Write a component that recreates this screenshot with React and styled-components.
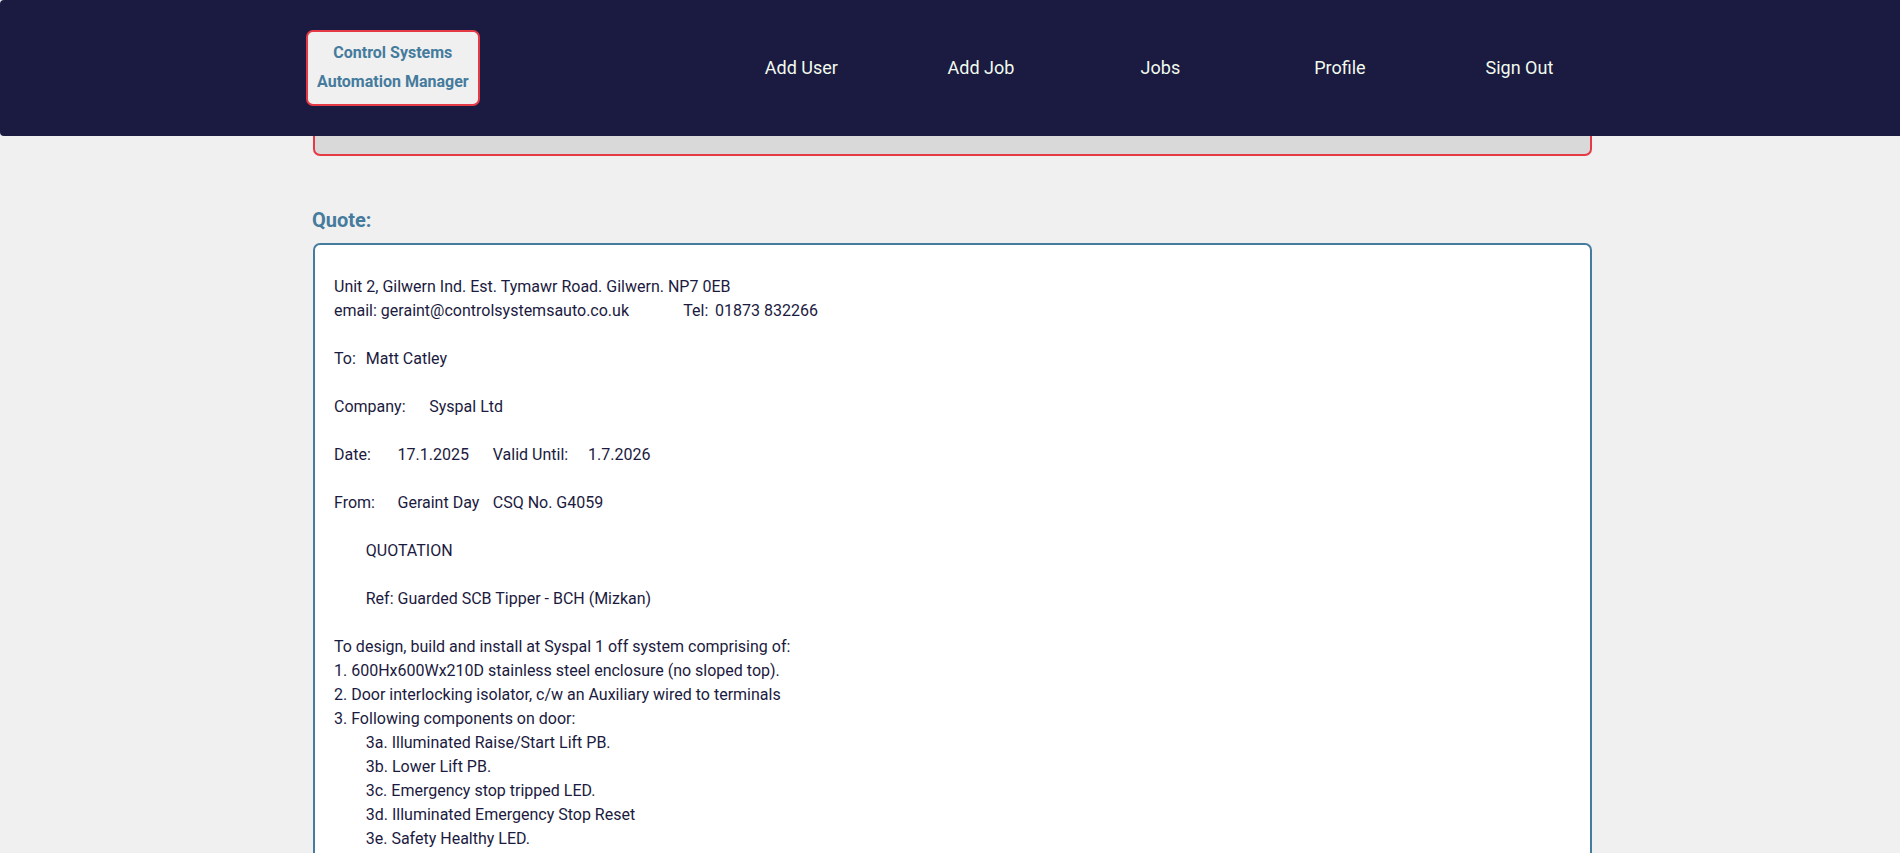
import { styled, createGlobalStyle } from 'styled-components'

const GlobalStyle = createGlobalStyle`
    html, body {
        margin: 0;
        padding: 0;
        background: #f0f0f0;
        font-family: Roboto, "Liberation Sans", sans-serif;
        color: #1b1a40;
        overflow: hidden;
    }
`;

const HeaderContainer = styled.header`
    position: fixed;
    top: 0;
    left: 0;
    right: 0;
    height: 136px;
    display: flex;
    align-items: center;
    padding-left: 306px;
    background: #1b1a40;
    border-radius: 4px 0 0 4px;
    z-index: 10;
`;

const Logo = styled.a`
    display: block;
    padding: 6px 9px 8px;
    background: #f0f0f0;
    border: 2px solid #e63946;
    border-radius: 7px;
    color: #457b9d;
    font-size: 16px;
    font-weight: 700;
    line-height: 29px;
    text-align: center;
    text-decoration: none;
`;

const Nav = styled.nav`
    display: flex;
    align-items: center;
    margin-left: 232px;
    padding-bottom: 2px;
`;

const NavLink = styled.a`
    width: 179.5px;
    text-align: center;
    color: #f1faee;
    font-size: 18px;
    text-decoration: none;
`;

const Main = styled.main`
    width: 1279px;
    margin-left: 313px;
`;

const TopPanel = styled.section`
    height: 156px;
    box-sizing: border-box;
    background: #d9d9d9;
    border: 2px solid #e63946;
    border-radius: 7px;
`;

const SectionTitle = styled.h2`
    margin: 52px 0 11px;
    text-indent: -1px;
    font-size: 20px;
    line-height: 24px;
    font-weight: 700;
    color: #457b9d;
`;

const QuoteBox = styled.div`
    background: #fff;
    border: 2px solid #457b9d;
    border-radius: 7px;
    padding: 30px 18px 60px 19px;
    font-size: 16px;
    line-height: 24px;
    white-space: pre-wrap;
    tab-size: 8;
`;

const quoteText = `Unit 2, Gilwern Ind. Est. Tymawr Road. Gilwern. NP7 0EB
email: geraint@controlsystemsauto.co.uk\t\tTel:\t01873 832266

To:\tMatt Catley

Company:\tSyspal Ltd

Date:\t17.1.2025\tValid Until:\t1.7.2026

From:\tGeraint Day\tCSQ No. G4059

\tQUOTATION

\tRef: Guarded SCB Tipper - BCH (Mizkan)

To design, build and install at Syspal 1 off system comprising of:
1. 600Hx600Wx210D stainless steel enclosure (no sloped top).
2. Door interlocking isolator, c/w an Auxiliary wired to terminals
3. Following components on door:
\t3a. Illuminated Raise/Start Lift PB.
\t3b. Lower Lift PB.
\t3c. Emergency stop tripped LED.
\t3d. Illuminated Emergency Stop Reset
\t3e. Safety Healthy LED.`;

const links = ['Add User', 'Add Job', 'Jobs', 'Profile', 'Sign Out'];

export default function App() {
    return (
        <>
            <GlobalStyle />
            <HeaderContainer>
                <Logo href="#">Control Systems<br />Automation Manager</Logo>
                <Nav>
                    {links.map(l => <NavLink key={l} href="#">{l}</NavLink>)}
                </Nav>
            </HeaderContainer>
            <Main>
                <TopPanel />
                <SectionTitle>Quote:</SectionTitle>
                <QuoteBox>{quoteText}</QuoteBox>
            </Main>
        </>
    );
}
